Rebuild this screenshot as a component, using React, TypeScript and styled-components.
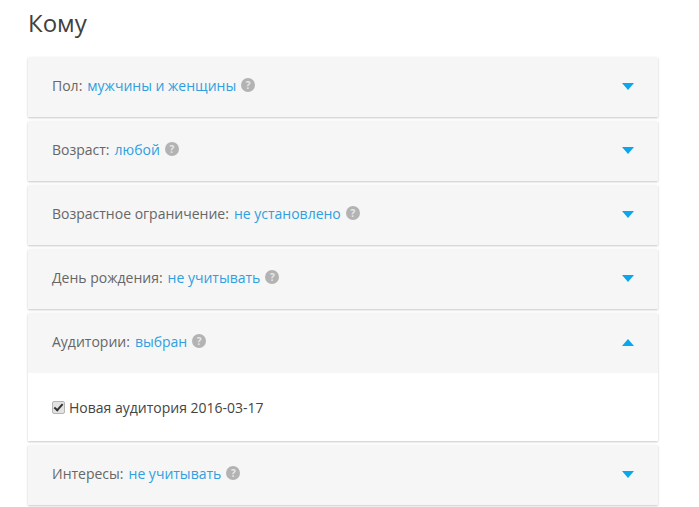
import React from 'react';
import styled, { createGlobalStyle } from 'styled-components';

const GlobalStyle = createGlobalStyle`
	html, body {
		margin: 0;
		padding: 0;
		background: #fff;
		font-family: 'Open Sans', 'Liberation Sans', sans-serif;
	}
`;

const Page = styled.div`
	width: 699px;
	height: 507px;
	box-sizing: border-box;
	padding: 6px 41px 0 28px;
	overflow: hidden;
`;

const Title = styled.h2`
	margin: 0 0 18px;
	font-size: 24px;
	line-height: 33px;
	font-weight: 400;
	color: #404040;
`;

const List = styled.div`
	display: flex;
	flex-direction: column;
	gap: 4px;
`;

const Panel = styled.section`
	background: #fff;
	box-shadow: 0 1px 2px rgba(0, 0, 0, 0.22);
`;

const Header = styled.div`
	display: flex;
	align-items: center;
	height: 60px;
	box-sizing: border-box;
	padding: 0 24px 4px;
	background: #f6f6f6;
	font-size: 14px;
`;

const Label = styled.span`
	color: #666;
	margin-right: 5px;
`;

const Value = styled.a`
	color: #2e9fe0;
	cursor: pointer;
`;

const Help = styled.span`
	display: flex;
	align-items: center;
	justify-content: center;
	width: 14px;
	height: 14px;
	margin-left: 5px;
	border-radius: 50%;
	background: #b3b3b3;
	color: #e8e8e8;
	font-size: 10px;
	font-weight: 700;
	line-height: 14px;
`;

const Arrow = styled.span<{ $open?: boolean }>`
	width: 0;
	height: 0;
	margin-top: 2px;
	margin-left: auto;
	border-left: 6px solid transparent;
	border-right: 6px solid transparent;
	${(p) => (p.$open ? 'border-bottom: 7px solid #0aa7ec;' : 'border-top: 7px solid #0aa7ec;')}
`;

const Body = styled.div`
	display: flex;
	align-items: center;
	height: 68px;
	padding: 0 24px;
`;

const CheckLabel = styled.label`
	display: flex;
	align-items: center;
	gap: 4px;
	font-size: 14px;
	color: #444;
`;

const Check = styled.input`
	appearance: none;
	position: relative;
	width: 13px;
	height: 13px;
	margin: 0;
	box-sizing: border-box;
	background: #e2e2e2;
	border: 1px solid #b5b5b5;
	border-radius: 2px;

	&:checked::after {
		content: '';
		position: absolute;
		left: 3px;
		top: 0;
		width: 5px;
		height: 9px;
		border: solid #333;
		border-width: 0 2px 2px 0;
		box-sizing: border-box;
		transform: rotate(42deg);
	}
`;

const rows = [
	{ label: 'Пол:', value: 'мужчины и женщины' },
	{ label: 'Возраст:', value: 'любой' },
	{ label: 'Возрастное ограничение:', value: 'не установлено' },
	{ label: 'День рождения:', value: 'не учитывать' },
	{ label: 'Аудитории:', value: 'выбран', open: true },
	{ label: 'Интересы:', value: 'не учитывать' },
];

export default function App() {
	return (
		<Page>
			<GlobalStyle />
			<Title>Кому</Title>
			<List>
				{rows.map((row) => (
					<Panel key={row.label}>
						<Header>
							<Label>{row.label}</Label>
							<Value>{row.value}</Value>
							<Help>?</Help>
							<Arrow $open={row.open} />
						</Header>
						{row.open && (
							<Body>
								<CheckLabel>
									<Check type="checkbox" defaultChecked />
									Новая аудитория 2016-03-17
								</CheckLabel>
							</Body>
						)}
					</Panel>
				))}
			</List>
		</Page>
	);
}
